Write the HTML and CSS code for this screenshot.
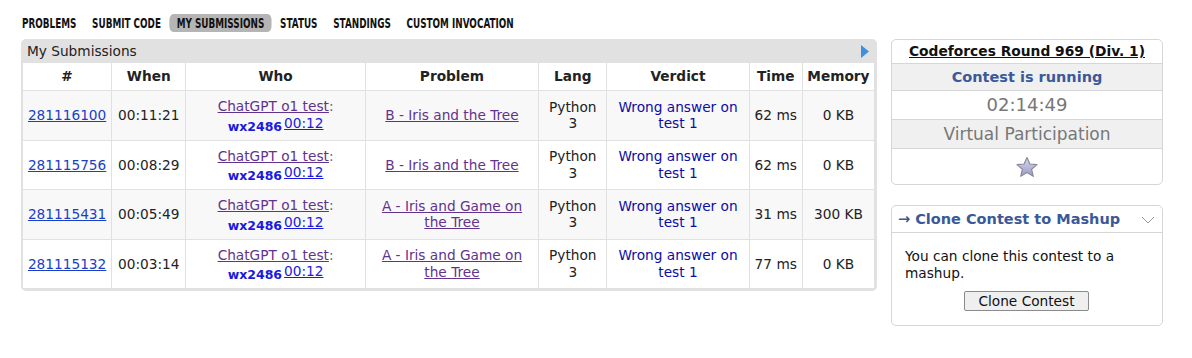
FILE: index.html
```html
<!DOCTYPE html>
<html lang="en">
<head>
  <meta charset="UTF-8">
  <title>My Submissions</title>
  <link rel="stylesheet" href="styles.css">
</head>
<body>

  <div class="page">
    <div class="content">
      <!-- top menu -->
      <ul class="menu">
        <li>PROBLEMS</li>
        <li>SUBMIT CODE</li>
        <li class="current">MY SUBMISSIONS</li>
        <li>STATUS</li>
        <li>STANDINGS</li>
        <li>CUSTOM INVOCATION</li>
      </ul>

      <div class="datatable">
        <div class="caption">
          <span>My Submissions</span>
          <svg class="arrow" width="8" height="13" viewBox="0 0 8 13"><path d="M0 0 L8 6.5 L0 13 Z" fill="#3f8fde"/></svg>
        </div>
        <table class="status">
          <tr>
            <th class="c-id">#</th>
            <th class="c-when">When</th>
            <th class="c-who">Who</th>
            <th class="c-prob">Problem</th>
            <th class="c-lang">Lang</th>
            <th class="c-verdict">Verdict</th>
            <th class="c-time">Time</th>
            <th class="c-mem">Memory</th>
          </tr>
          <tr class="dark">
            <td><a class="sid" href="#">281116100</a></td>
            <td>00:11:21</td>
            <td class="who"><a class="team" href="#">ChatGPT o1 test</a>:<br><span class="user">wx2486</span><a class="vtime" href="#">00:12</a></td>
            <td><a class="prob" href="#">B - Iris and the Tree</a></td>
            <td>Python<br>3</td>
            <td class="verdict">Wrong answer on<br>test 1</td>
            <td>62 ms</td>
            <td>0 KB</td>
          </tr>
          <tr>
            <td><a class="sid" href="#">281115756</a></td>
            <td>00:08:29</td>
            <td class="who"><a class="team" href="#">ChatGPT o1 test</a>:<br><span class="user">wx2486</span><a class="vtime" href="#">00:12</a></td>
            <td><a class="prob" href="#">B - Iris and the Tree</a></td>
            <td>Python<br>3</td>
            <td class="verdict">Wrong answer on<br>test 1</td>
            <td>62 ms</td>
            <td>0 KB</td>
          </tr>
          <tr class="dark">
            <td><a class="sid" href="#">281115431</a></td>
            <td>00:05:49</td>
            <td class="who"><a class="team" href="#">ChatGPT o1 test</a>:<br><span class="user">wx2486</span><a class="vtime" href="#">00:12</a></td>
            <td><a class="prob" href="#">A - Iris and Game on<br>the Tree</a></td>
            <td>Python<br>3</td>
            <td class="verdict">Wrong answer on<br>test 1</td>
            <td>31 ms</td>
            <td>300 KB</td>
          </tr>
          <tr>
            <td><a class="sid" href="#">281115132</a></td>
            <td>00:03:14</td>
            <td class="who"><a class="team" href="#">ChatGPT o1 test</a>:<br><span class="user">wx2486</span><a class="vtime" href="#">00:12</a></td>
            <td><a class="prob" href="#">A - Iris and Game on<br>the Tree</a></td>
            <td>Python<br>3</td>
            <td class="verdict">Wrong answer on<br>test 1</td>
            <td>77 ms</td>
            <td>0 KB</td>
          </tr>
        </table>
      </div>
    </div>

    <!-- sidebar -->
    <div class="sidebar">
      <div class="rtable contest">
        <div class="row title"><a href="#">Codeforces Round 969 (Div. 1)</a></div>
        <div class="row running">Contest is running</div>
        <div class="row big time">02:14:49</div>
        <div class="row big gray">Virtual Participation</div>
        <div class="row star">
          <svg width="24" height="22" viewBox="0 0 24 22">
            <defs>
              <linearGradient id="sg" x1="0" y1="0" x2="0" y2="1">
                <stop offset="0" stop-color="#d8d8ee"/>
                <stop offset="1" stop-color="#9a9ac8"/>
              </linearGradient>
            </defs>
            <path d="M12 1.5 L14.9 8 L22 8.6 L16.6 13.3 L18.3 20.3 L12 16.6 L5.7 20.3 L7.4 13.3 L2 8.6 L9.1 8 Z" fill="url(#sg)" stroke="#8a8a9a" stroke-width="1.2" stroke-linejoin="round"/>
          </svg>
        </div>
      </div>

      <div class="rtable clone">
        <div class="clone-head">
          <span>&rarr; Clone Contest to Mashup</span>
          <svg class="chev" width="14" height="8" viewBox="0 0 14 8"><path d="M1 1 L7 7 L13 1" fill="none" stroke="#9a9a9a" stroke-width="1"/></svg>
        </div>
        <div class="clone-body">
          <p>You can clone this contest to a mashup.</p>
          <div class="btn-wrap"><button class="btn">Clone Contest</button></div>
        </div>
      </div>
    </div>
  </div>

</body>
</html>
```

FILE: styles.css
```css
body {
  margin: 0;
  font-family: 'DejaVu Sans', Verdana, sans-serif;
  font-size: 13.7px;
  color: #222;
  background: #fff;
}

a {
  text-decoration: underline;
}

.page {
  display: flex;
  align-items: flex-start;
  padding: 14px 0 0 21px;
  gap: 14px;
}

.content {
  width: 856px;
}

/* narrow bold menu: no condensed face installed, so squeeze horizontally */
.menu {
  list-style: none;
  margin: 0 0 7px 1px;
  padding: 0;
  display: flex;
  font-family: 'DejaVu Sans', sans-serif;
  font-weight: bold;
  font-size: 13.5px;
  color: #111;
  transform: scaleX(0.655);
  transform-origin: left center;
}

.menu li {
  padding: 1px 0;
  line-height: 16px;
  margin-right: 24px;
}

.menu li.current {
  background: #b5b5b5;
  border-radius: 6px;
  padding: 1px 11px;
  margin: 0 13px 0 -11px;
}

.datatable {
  background: #e1e1e1;
  border-radius: 5px;
  padding: 0 3px 3px 2px;
}

.caption {
  height: 24px;
  display: flex;
  align-items: center;
  justify-content: space-between;
  padding: 0 5px 0 4px;
  color: #222;
}

.caption .arrow {
  margin-top: 1px;
}

.status {
  width: 100%;
  border-collapse: collapse;
  background: #fff;
}

.status th,
.status td {
  border-left: 1px solid #e1e1e1;
  border-top: 1px solid #e1e1e1;
  text-align: center;
  padding: 0 3px;
  line-height: 16.5px;
}

.status th:first-child,
.status td:first-child {
  border-left: none;
}

.status tr:first-child th {
  border-top: none;
}

.status th {
  height: 27px;
  font-weight: bold;
}

.status td {
  height: 48.5px;
}

.status tr.dark td {
  background: #f8f8f8;
}

.c-id { width: 82px; }
.c-when { width: 67px; }
.c-who { width: 172px; }
.c-prob { width: 166px; }
.c-lang { width: 61px; }
.c-verdict { width: 135px; }
.c-time { width: 46px; }
.c-mem { width: 65px; }

.sid {
  color: #1a3ec8;
}

.team,
.prob {
  color: #62328e;
}

.who {
  color: #666;
}

.user {
  color: #1a1ae0;
  font-weight: bold;
  font-size: 12.5px;
  position: relative;
  top: 3px;
  margin-right: 2px;
}

.vtime {
  color: #1a1ae0;
}

.verdict {
  color: #0c0ca8;
}

.sidebar {
  width: 272px;
  margin-top: 25px;
}

.rtable {
  border: 1px solid #d6d6d6;
  border-radius: 5px;
  overflow: hidden;
}

.row {
  text-align: center;
  border-top: 1px solid #d6d6d6;
}

.row:first-child {
  border-top: none;
}

.row.title {
  height: 23px;
  line-height: 23px;
  font-weight: bold;
  font-size: 13.8px;
}

.row.title a {
  color: #111;
}

.row.running {
  height: 26px;
  line-height: 26px;
  background: #f0f0f0;
  color: #3b5998;
  font-weight: bold;
  font-size: 14.5px;
}

.row.big {
  height: 28px;
  line-height: 28px;
  font-size: 17px;
  color: #777;
}

.row.time {
  font-size: 18px;
}

.row.gray {
  background: #f0f0f0;
}

.row.star {
  height: 35px;
  display: flex;
  align-items: center;
  justify-content: center;
}

.clone {
  margin-top: 20px;
}

.clone-head {
  height: 26px;
  border-bottom: 1px solid #d6d6d6;
  display: flex;
  align-items: center;
  justify-content: space-between;
  padding: 0 7px 0 6px;
  color: #3b5998;
  font-weight: bold;
  font-size: 14.5px;
}

.chev {
  margin-top: 2px;
}

.clone-body {
  padding: 15px 14px 14px 13px;
}

.clone-body p {
  margin: 0 0 10px 0;
  line-height: 16.5px;
  color: #111;
}

.btn-wrap {
  text-align: center;
}

.btn {
  font-family: 'DejaVu Sans', Verdana, sans-serif;
  font-size: 13.7px;
  color: #111;
  background: #efefef;
  border: 1px solid #8a8a8a;
  border-radius: 2px;
  padding: 0 10px;
  width: 125px;
  height: 20px;
}
```
